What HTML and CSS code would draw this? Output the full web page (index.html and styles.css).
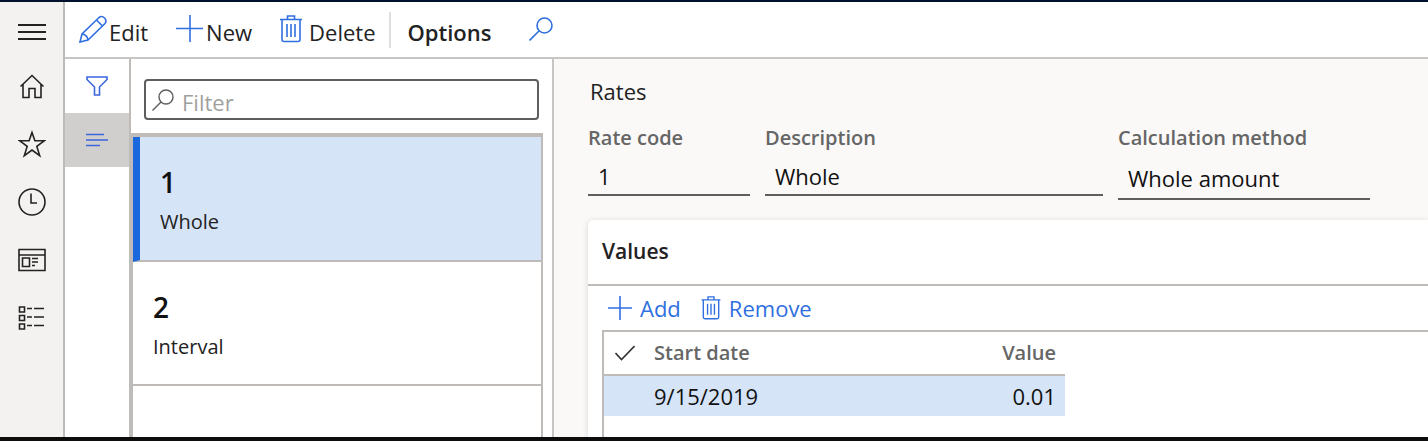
FILE: index.html
```html
<!DOCTYPE html>
<html lang="en">
<head>
<meta charset="utf-8">
<title>Rates</title>
<link rel="stylesheet" href="styles.css">
</head>
<body>
<div class="app">
  <nav class="nav" aria-label="Main">
    <button class="nav-button nav-menu" aria-label="Menu"><svg width="28" height="18" viewBox="0 0 28 18"><path d="M0 2h28M0 9h28M0 16h28" stroke-width="2"/></svg></button>
    <button class="nav-button" aria-label="Home"><svg width="28" height="28" viewBox="0 0 28 28"><path d="M2.500 14.500L14 3.500l11.500 11M5 12.500v13h6v-9h6v9h6v-13"/></svg></button>
    <button class="nav-button" aria-label="Favorites"><svg width="28" height="28" viewBox="0 0 28 28"><path d="M14 2.500l2.900 8.300h9.300l-7.400 5.600 2.900 9.200-7.700-5.500-7.700 5.500 2.900-9.200-7.400-5.600h9.300z"/></svg></button>
    <button class="nav-button" aria-label="Recent"><svg width="28" height="28" viewBox="0 0 28 28"><circle cx="14" cy="14" r="13"/><path d="M13 5.500v9.500h6"/></svg></button>
    <button class="nav-button" aria-label="Workspaces"><svg width="28" height="24" viewBox="0 0 28 24"><path d="M1 1.500h26v21H1zM1 7h26M4.500 10h7v8.500h-7zM14 10.500h6M14 14h6M14 17.500h3"/></svg></button>
    <button class="nav-button" aria-label="Modules"><svg width="28" height="24" viewBox="0 0 28 24"><path d="M1.500 1h5v5h-5zM1.500 9.500h5v5h-5zM1.500 18h5v5h-5zM9 2.500h5M16 2.500h10M9 11h5M16 11h10M9 19.500h5M16 19.500h10"/></svg></button>
  </nav>
  <div class="workspace">
    <header class="toolbar">
      <button class="tool tool-edit"><svg width="28" height="28" viewBox="0 0 28 28"><path d="M1 27l2-8L20 2.500a4.300 4.300 0 0 1 6 6L9 25zM17.500 5l6 6M3 19c3 0 6 3 6 6"/></svg>Edit</button>
      <button class="tool tool-new"><svg width="28" height="28" viewBox="0 0 28 28"><path d="M14 0v27M0 13.500h27"/></svg>New</button>
      <button class="tool tool-delete"><svg width="22" height="28" viewBox="0 0 22 28"><path d="M0 4.500h22M2 4.500v20a2 2 0 0 0 2 2h14a2 2 0 0 0 2-2v-20M7.500 4V1h7v3M7 9v13M11 9v13M15 9v13"/></svg>Delete</button>
      <button class="tool tool-options">Options</button>
      <button class="tool tool-search" aria-label="Search"><svg width="24" height="24" viewBox="0 0 24 24"><circle cx="15.500" cy="8.500" r="7.500"/><path d="M10 14L0.500 23.500"/></svg></button>
    </header>
    <div class="body">
      <div class="rail">
        <button class="rail-button" aria-label="Show filters"><svg width="22" height="20" viewBox="0 0 22 20"><path d="M1 1h20v2.500l-7.500 7.500v8h-5v-8L1 3.500z"/></svg></button>
        <button class="rail-button rail-active" aria-label="Show list"><svg width="22" height="14" viewBox="0 0 22 14"><path d="M0 1.500h18M0 7h22M0 12.500h14"/></svg></button>
      </div>
      <section class="list">
        <label class="filter">
          <svg width="22" height="22" viewBox="0 0 22 22"><circle cx="14" cy="8" r="7"/><path d="M9 13L0.500 21.500"/></svg>
          <input type="text" placeholder="Filter" aria-label="Filter">
        </label>
        <div class="records">
          <button class="record record-selected"><strong class="record-code">1</strong><span>Whole</span></button>
          <button class="record"><strong class="record-code">2</strong><span>Interval</span></button>
        </div>
      </section>
      <main class="detail">
        <h1 class="title">Rates</h1>
        <div class="fields">
          <div class="field field-code"><label for="code">Rate code</label><input id="code" type="text" value="1"></div>
          <div class="field field-description"><label for="description">Description</label><input id="description" type="text" value="Whole"></div>
          <div class="field field-method"><label for="method">Calculation method</label><select id="method"><option>Whole amount</option></select></div>
        </div>
        <section class="card">
          <h2 class="card-title">Values</h2>
          <div class="actions">
            <button class="action"><svg width="24" height="24" viewBox="0 0 24 24"><path d="M12 0v24M0 12h24"/></svg>Add</button>
            <button class="action"><svg width="20" height="24" viewBox="0 0 22 28"><path d="M0 4.500h22M2 4.500v20a2 2 0 0 0 2 2h14a2 2 0 0 0 2-2v-20M7.500 4V1h7v3M7 9v13M11 9v13M15 9v13"/></svg>Remove</button>
          </div>
          <div class="grid">
            <table class="table">
              <thead><tr><th class="cell-mark"><svg width="20" height="16" viewBox="0 0 20 16"><path d="M0.500 8l6 6.500L19.500 1"/></svg></th><th>Start date</th><th class="cell-value">Value</th></tr></thead>
              <tbody><tr><td></td><td>9/15/2019</td><td class="cell-value">0.01</td></tr></tbody>
            </table>
          </div>
        </section>
      </main>
    </div>
  </div>
</div>
</body>
</html>
```
FILE: styles.css
```css
* {
  box-sizing: border-box;
}

body {
  margin: 0;
  color: #222;
  background: #fff;
  font: 22px/28px "Open Sans", "Noto Sans", sans-serif;
}

button,
input,
select {
  margin: 0;
  padding: 0;
  border: 0;
  border-radius: 0;
  background: none;
  color: inherit;
  font: inherit;
}

svg {
  display: block;
  flex: none;
  fill: none;
  stroke: currentColor;
  stroke-width: 1.6;
}

.app {
  display: flex;
  min-height: 100vh;
  border-top: 2px solid #00112e;
  border-bottom: 4px solid #0c0c0c;
}

.nav {
  flex: none;
  width: 65px;
  padding-top: 5px;
  border-right: 2px solid #bebbb8;
  background: #f3f2f1;
}

.nav-button {
  display: flex;
  align-items: center;
  justify-content: center;
  width: 100%;
  height: 58px;
}

.nav-menu {
  height: 50px;
}

.workspace {
  display: flex;
  flex: 1;
  flex-direction: column;
  min-width: 0;
}

.toolbar {
  display: flex;
  align-items: center;
  height: 57px;
  padding-left: 14px;
  border-bottom: 2px solid #c8c6c4;
}

.tool {
  display: flex;
  align-items: center;
  gap: 2px;
  height: 36px;
  padding-top: 4px;
}

.tool svg {
  margin-bottom: 6px;
  color: #2f6fe0;
}

.tool-new {
  margin-left: 28px;
}

.tool-delete {
  gap: 7px;
  margin-left: 28px;
}

.tool-options {
  margin-left: 14px;
  padding-left: 16px;
  border-left: 2px solid #e1dfdd;
  font-weight: 600;
}

.tool-search {
  margin-left: 38px;
}

.body {
  display: flex;
  flex: 1;
}

.rail {
  flex: none;
  width: 66px;
  border-right: 2px solid #bebbb8;
}

.rail-button {
  display: flex;
  align-items: center;
  justify-content: center;
  width: 100%;
  height: 54px;
  color: #3c66dc;
}

.rail-active {
  background: #d0cfce;
}

.list {
  display: flex;
  flex: none;
  flex-direction: column;
  width: 423px;
  border-right: 2px solid #c8c6c4;
}

.filter {
  display: flex;
  align-items: center;
  gap: 8px;
  height: 41px;
  margin: 20px 13px 13px;
  padding-left: 6px;
  border: 2px solid #605e5c;
  border-radius: 4px;
  color: #605e5c;
}

.filter svg {
  stroke-width: 1.4;
}

.filter input {
  flex: 1;
  min-width: 0;
  padding-top: 4px;
  outline: 0;
}

.filter input::placeholder {
  color: #a19f9d;
  opacity: 1;
}

.records {
  flex: 1;
  margin-right: 9px;
  border: 2px solid #bebbb8;
  border-top-width: 4px;
  border-bottom: 0;
}

.record {
  display: flex;
  flex-direction: column;
  gap: 12px;
  width: 100%;
  height: 124px;
  padding: 31px 20px 0;
  border-bottom: 2px solid #bebbb8;
  font-size: 20px;
  text-align: left;
}

.record-selected {
  height: 125px;
  border-left: 7px solid #1b68dc;
  background: #d6e4f7;
}

.record-code {
  color: #111;
  font-size: 28px;
  font-weight: 600;
}

.detail {
  flex: 1;
  min-width: 0;
  padding: 18px 0 0 34px;
  background: #faf9f8;
  overflow: hidden;
}

.title {
  margin: 0;
  padding-left: 2px;
  font-size: 22px;
  font-weight: 400;
}

.fields {
  display: flex;
  gap: 15px;
  margin: 19px 58px 20px 0;
}

.field {
  display: flex;
  flex-direction: column;
  align-items: stretch;
}

.field label {
  color: #666;
  font-size: 20px;
  font-weight: 600;
}

.field input,
.field select {
  width: 100%;
  height: 44px;
  padding: 6px 10px 0;
  border-bottom: 2px solid #605e5c;
  color: #111;
  appearance: none;
}

.field select {
  height: 48px;
}

.field-code {
  flex: 0 1 162px;
}

.field-description {
  flex: 0 1 338px;
}

.field-method {
  flex: 0 1 252px;
}

.card {
  min-height: 217px;
  border-radius: 5px 0 0 0;
  background: #fff;
  box-shadow: 0 1px 6px rgba(0, 0, 0, 0.14);
}

.card-title {
  margin: 0;
  padding: 17px 14px 19px;
  border-bottom: 2px solid #bebbb8;
  font-size: 21px;
  font-weight: 600;
}

.actions {
  display: flex;
  align-items: center;
  gap: 20px;
  height: 44px;
  padding-left: 20px;
}

.action {
  display: flex;
  align-items: center;
  gap: 8px;
  color: #2f6fe0;
}

.grid {
  min-height: 107px;
  margin-left: 14px;
  border-top: 2px solid #bebbb8;
  border-left: 2px solid #bebbb8;
}

.table {
  width: 100%;
  max-width: 461px;
  border-collapse: collapse;
}

.table th,
.table td {
  height: 41px;
  padding: 0;
  color: #111;
  text-align: left;
}

.table th {
  height: 43px;
  border-bottom: 2px solid #bebbb8;
  color: #666;
  font-size: 20px;
  font-weight: 600;
}

.table tbody tr {
  background: #d6e4f7;
}

.table .cell-mark {
  width: 50px;
  padding-left: 11px;
  color: #333;
}

.table .cell-value {
  padding-right: 9px;
  text-align: right;
}
```
